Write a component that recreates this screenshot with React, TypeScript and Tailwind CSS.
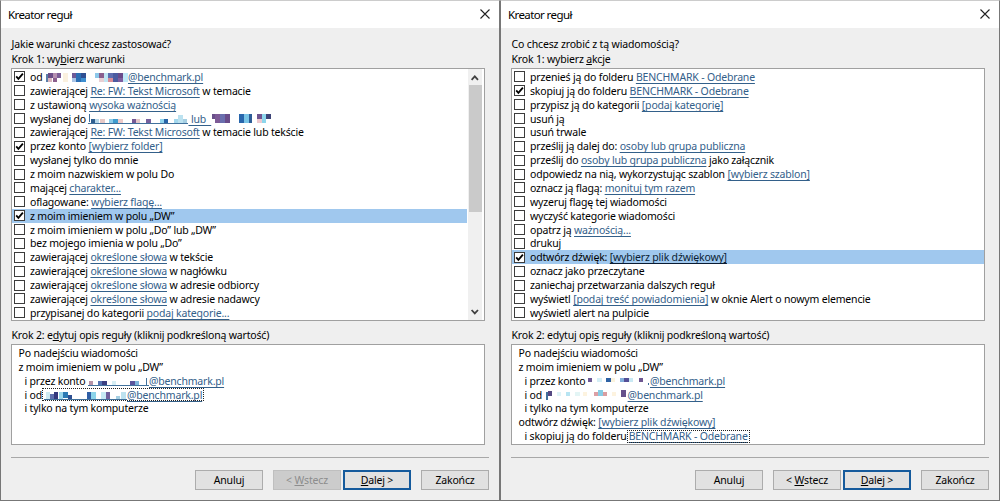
import type { ReactNode } from "react";

// ── Types ─────────────────────────────────────────────────────────────────────

// x, y, width, height, fill
type Cell = [number, number, number, number, string];

interface Part {
  text?: string;
  link?: boolean;
  mosaic?: { width: number; cells: Cell[]; underline?: boolean };
}

interface Option {
  parts: Part[];
  checked?: boolean;
  selected?: boolean;
}

interface Line {
  parts: Part[];
  indent?: boolean;
  focus?: boolean;
}

const t = (text: string): Part => ({ text });
const a = (text: string): Part => ({ text, link: true });
const m = (width: number, cells: Cell[], underline = false): Part => ({
  mosaic: { width, cells, underline },
});

// ── Data ──────────────────────────────────────────────────────────────────────

const conditions: Option[] = [
  {
    checked: true,
    parts: [
      t("od "),
      m(83, [
        [1, 4, 2, 8, "#5a7fa8"], [3, 3, 5, 5, "#6b4d86"], [8, 3, 4, 5, "#b58fb0"], [12, 3, 4, 5, "#7a5c96"],
        [3, 8, 4, 4, "#d9b5bd"], [8, 8, 4, 4, "#8a5f8e"], [18, 3, 5, 9, "#fbf1df"],
        [27, 3, 4, 5, "#6d5a98"], [27, 8, 4, 4, "#a9c4e6"], [31, 3, 5, 9, "#2d6fb4"], [36, 3, 5, 5, "#2f4f93"], [36, 8, 5, 4, "#3f8fd0"],
        [50, 3, 4, 5, "#8cc8ea"], [54, 3, 5, 5, "#8a5f8e"], [54, 8, 5, 4, "#e8cfd3"], [59, 3, 4, 9, "#bfe6f4"],
        [63, 3, 5, 5, "#5f6eb0"], [63, 8, 5, 4, "#d98d97"], [68, 3, 5, 9, "#4b5ba0"], [73, 3, 5, 5, "#684b8a"], [73, 8, 5, 4, "#7d5da0"], [78, 3, 5, 9, "#bfe9f8"],
      ]),
      a("@benchmark.pl"),
    ],
  },
  { parts: [t("zawierającej "), a("Re: FW: Tekst Microsoft"), t(" w temacie")] },
  { parts: [t("z ustawioną "), a("wysoka ważnością")] },
  {
    parts: [
      t("wysłanej do "),
      m(
        100,
        [
          [1, 2, 1, 8, "#41719c"], [3, 7, 4, 4, "#2f5f90"], [7, 7, 4, 4, "#b6d6e8"], [12, 7, 5, 4, "#e6c8c6"], [21, 7, 4, 4, "#8ccbe8"],
          [25, 7, 5, 4, "#3f9ccf"], [30, 7, 5, 4, "#eccaca"], [44, 7, 4, 4, "#765a96"], [48, 7, 4, 4, "#e3c7c9"], [58, 7, 5, 4, "#76619e"],
          [72, 7, 4, 4, "#8fd4ee"], [76, 7, 4, 4, "#2864a8"], [86, 7, 4, 4, "#a3d8ee"], [90, 3, 5, 8, "#bce2f0"], [95, 7, 4, 4, "#a6cfe2"],
        ],
        true,
      ),
      a(" lub  "),
      m(62, [
        [1, 2, 3, 5, "#69508a"], [4, 2, 5, 9, "#7d5a96"], [9, 2, 5, 9, "#6a6fae"], [14, 2, 5, 9, "#694c8a"], [28, 2, 5, 9, "#2866ac"], [33, 2, 5, 9, "#79c4e6"],
        [38, 2, 3, 9, "#2e5d97"], [46, 2, 5, 5, "#6f548f"], [46, 7, 5, 4, "#edc9cf"], [51, 2, 4, 9, "#8cd6ec"], [55, 2, 5, 5, "#3d4477"],
      ]),
    ],
  },
  { parts: [t("zawierającej "), a("Re: FW: Tekst Microsoft"), t(" w temacie lub tekście")] },
  { checked: true, parts: [t("przez konto "), a("[wybierz folder]")] },
  { parts: [t("wysłanej tylko do mnie")] },
  { parts: [t("z moim nazwiskiem w polu Do")] },
  { parts: [t("mającej "), a("charakter...")] },
  { parts: [t("oflagowane: "), a("wybierz flagę...")] },
  { checked: true, selected: true, parts: [t("z moim imieniem w polu „DW”")] },
  { parts: [t("z moim imieniem w polu „Do” lub „DW”")] },
  { parts: [t("bez mojego imienia w polu „Do”")] },
  { parts: [t("zawierającej "), a("określone słowa"), t(" w tekście")] },
  { parts: [t("zawierającej "), a("określone słowa"), t(" w nagłówku")] },
  { parts: [t("zawierającej "), a("określone słowa"), t(" w adresie odbiorcy")] },
  { parts: [t("zawierającej "), a("określone słowa"), t(" w adresie nadawcy")] },
  { parts: [t("przypisanej do kategorii "), a("podaj kategorie...")] },
];

const actions: Option[] = [
  { parts: [t("przenieś ją do folderu "), a("BENCHMARK - Odebrane")] },
  { checked: true, parts: [t("skopiuj ją do folderu "), a("BENCHMARK - Odebrane")] },
  { parts: [t("przypisz ją do kategorii "), a("[podaj kategorię]")] },
  { parts: [t("usuń ją")] },
  { parts: [t("usuń trwale")] },
  { parts: [t("prześlij ją dalej do: "), a("osoby lub grupa publiczna")] },
  { parts: [t("prześlij do "), a("osoby lub grupa publiczna"), t(" jako załącznik")] },
  { parts: [t("odpowiedz na nią, wykorzystując szablon "), a("[wybierz szablon]")] },
  { parts: [t("oznacz ją flagą: "), a("monituj tym razem")] },
  { parts: [t("wyzeruj flagę tej wiadomości")] },
  { parts: [t("wyczyść kategorie wiadomości")] },
  { parts: [t("opatrz ją "), a("ważnością...")] },
  { parts: [t("drukuj")] },
  { checked: true, selected: true, parts: [t("odtwórz dźwięk: "), a("[wybierz plik dźwiękowy]")] },
  { parts: [t("oznacz jako przeczytane")] },
  { parts: [t("zaniechaj przetwarzania dalszych reguł")] },
  { parts: [t("wyświetl "), a("[podaj treść powiadomienia]"), t(" w oknie Alert o nowym elemencie")] },
  { parts: [t("wyświetl alert na pulpicie")] },
];

const conditionSummary: Line[] = [
  { parts: [t("Po nadejściu wiadomości")] },
  { parts: [t("z moim imieniem w polu „DW”")] },
  {
    indent: true,
    parts: [
      t("i przez konto "),
      m(
        61,
        [
          [1, 7, 4, 4, "#b894a8"], [10, 7, 4, 4, "#5876b4"], [14, 7, 5, 4, "#3b3f80"], [24, 7, 4, 4, "#d6eef4"],
          [42, 7, 5, 4, "#5c549c"], [47, 7, 4, 4, "#7fb6dc"], [58, 4, 1, 7, "#41719c"],
        ],
        true,
      ),
      a("@benchmark.pl"),
    ],
  },
  {
    indent: true,
    focus: true,
    parts: [
      t("i od"),
      m(
        83,
        [
          [2, 4, 4, 7, "#cdeaf2"], [6, 6, 4, 5, "#5f6fae"], [10, 4, 4, 7, "#35377c"], [15, 4, 4, 7, "#9bd7ec"], [19, 4, 5, 6, "#2c7ab4"], [24, 7, 4, 4, "#2e4f92"],
          [43, 4, 4, 7, "#2f5fa6"], [47, 4, 5, 7, "#8cd4ea"], [57, 4, 5, 7, "#c6e9f4"], [62, 4, 4, 7, "#70609c"], [72, 8, 4, 3, "#a5cfe2"], [77, 4, 5, 7, "#bde2ef"],
        ],
        true,
      ),
      a("@benchmark.pl"),
    ],
  },
  { indent: true, parts: [t("i tylko na tym komputerze")] },
];

const actionSummary: Line[] = [
  { parts: [t("Po nadejściu wiadomości")] },
  { parts: [t("z moim imieniem w polu „DW”")] },
  {
    indent: true,
    parts: [
      t("i przez konto "),
      m(62, [
        [0, 4, 4, 4, "#6c5a94"], [9, 4, 5, 4, "#d4eef6"], [18, 4, 5, 4, "#2f62a4"], [23, 4, 4, 4, "#fbf3dc"], [32, 4, 4, 4, "#83aedb"],
        [36, 4, 5, 4, "#544f96"], [41, 4, 4, 4, "#c9e9f4"], [51, 4, 4, 4, "#6e5791"], [60, 9, 1, 2, "#41719c"],
      ]),
      a("@benchmark.pl"),
    ],
  },
  {
    indent: true,
    parts: [
      t("i od "),
      m(83, [
        [1, 4, 2, 8, "#41719c"], [3, 3, 4, 5, "#554982"], [12, 4, 4, 4, "#dff3f7"], [21, 4, 4, 4, "#b7e4f2"], [30, 4, 5, 4, "#e3f5f5"], [38, 4, 4, 4, "#fdf3df"],
        [49, 4, 4, 4, "#dc9fa5"], [53, 2, 5, 6, "#87cce4"], [58, 4, 4, 4, "#d99da0"], [67, 4, 4, 4, "#fdf3df"], [76, 2, 5, 7, "#65508b"],
      ]),
      a("@benchmark.pl"),
    ],
  },
  { indent: true, parts: [t("i tylko na tym komputerze")] },
  { parts: [t("odtwórz dźwięk: "), a("[wybierz plik dźwiękowy]")] },
  { indent: true, focus: true, parts: [t("i skopiuj ją do folderu"), a("BENCHMARK - Odebrane")] },
];

// ── Text ──────────────────────────────────────────────────────────────────────

function Mosaic({ width, cells, underline }: { width: number; cells: Cell[]; underline?: boolean }) {
  return (
    <svg width={width} height={14} viewBox={`0 0 ${width} 14`} shapeRendering="crispEdges" className="shrink-0">
      {underline && <rect x={0} y={11} width={width} height={1} fill="#41719c" />}
      {cells.map(([x, y, w, h, fill], i) => (
        <rect key={i} x={x} y={y} width={w} height={h} fill={fill} />
      ))}
    </svg>
  );
}

function PartView({ part, selected }: { part: Part; selected?: boolean }) {
  if (part.mosaic) return <Mosaic {...part.mosaic} />;
  if (part.link) {
    return (
      <span
        className={`underline decoration-1 underline-offset-[1.5px] [text-decoration-skip-ink:none] ${
          selected ? "text-[#0a1c33]" : "text-[#33608a]"
        }`}
      >
        {part.text}
      </span>
    );
  }
  return <span>{part.text}</span>;
}

// ── Lists ─────────────────────────────────────────────────────────────────────

function Checkbox({ checked }: { checked?: boolean }) {
  return (
    <span className="ml-0.5 mr-[5px] flex size-[11px] shrink-0 items-center justify-center border border-[#3c3c3c] bg-white">
      {checked && (
        <svg width="9" height="9" viewBox="0 0 9 9" fill="none">
          <path d="M1.2 4.4 3.4 6.8 7.9 1.6" stroke="#000" strokeWidth="1.8" />
        </svg>
      )}
    </span>
  );
}

function OptionRow({ option }: { option: Option }) {
  return (
    <li className={`flex h-[13.88px] items-center whitespace-pre ${option.selected ? "bg-[#a0c8ee]" : ""}`}>
      <Checkbox checked={option.checked} />
      {option.parts.map((part, i) => (
        <PartView key={i} part={part} selected={option.selected} />
      ))}
    </li>
  );
}

function ScrollBar() {
  return (
    <div className="ml-px mr-0.5 flex w-3.5 shrink-0 flex-col items-center bg-[#f0f0f0]">
      <svg width="14" height="16" viewBox="0 0 14 16" fill="none">
        <path d="M3.6 10.8 6.8 7.4 10 10.8" stroke="#404040" strokeWidth="1.8" />
      </svg>
      <div className="h-[127px] w-[13px] bg-[#cacaca]" />
      <svg width="14" height="14" viewBox="0 0 14 14" fill="none" className="mt-auto">
        <path d="M3.6 4 6.8 7.4 10 4" stroke="#404040" strokeWidth="1.8" />
      </svg>
    </div>
  );
}

function SummaryLine({ line }: { line: Line }) {
  const [first, ...rest] = line.parts;
  return (
    <p className={`flex h-[13.88px] items-center whitespace-pre ${line.indent ? "pl-[12.5px]" : "pl-[6.5px]"}`}>
      <PartView part={first} />
      {line.focus ? (
        <span className="flex h-[13px] items-center px-0.5 outline outline-dotted outline-[#222] -outline-offset-1">
          {rest.map((part, i) => (
            <PartView key={i} part={part} />
          ))}
        </span>
      ) : (
        rest.map((part, i) => <PartView key={i} part={part} />)
      )}
    </p>
  );
}

// ── Dialog ────────────────────────────────────────────────────────────────────

function Button({ children, className = "" }: { children: ReactNode; className?: string }) {
  return (
    <button className={`flex h-5 w-[68px] items-center justify-center whitespace-pre border pb-px ${className}`}>
      {children}
    </button>
  );
}

const normal = "border-[#acacac] bg-[#e1e1e1]";

interface DialogProps {
  question: string;
  step1: ReactNode;
  step2: ReactNode;
  options: Option[];
  summary: Line[];
  scroll?: boolean;
  backDisabled?: boolean;
}

function Dialog({ question, step1, step2, options, summary, scroll, backDisabled }: DialogProps) {
  return (
    <section className="flex h-[501px] w-[500px] flex-col border border-[#777] border-t-[#ccc] bg-[#efefef]">
      <header className="flex h-[27px] shrink-0 items-center justify-between bg-white pl-[7px] pr-[9px] text-[11.5px] tracking-[-0.6px]">
        <h1>Kreator reguł</h1>
        <svg width="10" height="10" viewBox="0 0 10 10" className="mb-px">
          <path d="M.5.5l9 9M9.500.5l-9 9" stroke="#222" strokeWidth="1.1" />
        </svg>
      </header>

      <div className="flex flex-col pl-2.5 pr-3.5 pt-[9px]">
        <h2 className="h-[15px] pl-[0.5px] leading-[15px] tracking-[-0.15px]">{question}</h2>
        <h3 className="h-4 pl-[0.5px] leading-[15px]">{step1}</h3>

        <div className="flex h-[253px] border border-[#a0a0a0] bg-white">
          <ul className="min-w-0 flex-1 pt-px">
            {options.map((option, i) => (
              <OptionRow key={i} option={option} />
            ))}
          </ul>
          {scroll && <ScrollBar />}
        </div>

        <h3 className="mt-[7px] h-4 pl-[0.5px] leading-[15px]">{step2}</h3>
        <div className="h-[101px] border border-[#a0a0a0] bg-white pt-px">
          {summary.map((line, i) => (
            <SummaryLine key={i} line={line} />
          ))}
        </div>
      </div>

      <div className="ml-2.5 mr-2.5 mt-3 border-t border-[#a8a8a8]" />
      <footer className="flex justify-end pr-2.5 pt-3">
        <Button className={`mr-2.5 ${normal}`}>Anuluj</Button>
        <Button className={`mr-0.5 ${backDisabled ? "border-[#bfbfbf] bg-[#cccccc] text-[#8d8d8d]" : normal}`}>
          {"< "}
          <u>W</u>stecz
        </Button>
        <Button className="mr-2.5 border-2 border-[#155a9c] bg-[#e1e1e1]">
          <u>D</u>alej {">"}
        </Button>
        <Button className={normal}>Zakończ</Button>
      </footer>
    </section>
  );
}

export default function App() {
  return (
    <main className="flex h-[501px] w-[1000px] overflow-hidden font-['Noto_Sans','Open_Sans',sans-serif] text-[10.5px] leading-[14px] tracking-[-0.18px] text-black">
      <Dialog
        question="Jakie warunki chcesz zastosować?"
        step1={<>Krok 1: wy<u>b</u>ierz warunki</>}
        step2={<>Krok 2: e<u>d</u>ytuj opis reguły (kliknij podkreśloną wartość)</>}
        options={conditions}
        summary={conditionSummary}
        scroll
        backDisabled
      />
      <Dialog
        question="Co chcesz zrobić z tą wiadomością?"
        step1={<>Krok 1: wybierz <u>a</u>kcje</>}
        step2={<>Krok 2: edytuj opi<u>s</u> reguły (kliknij podkreśloną wartość)</>}
        options={actions}
        summary={actionSummary}
      />
    </main>
  );
}
